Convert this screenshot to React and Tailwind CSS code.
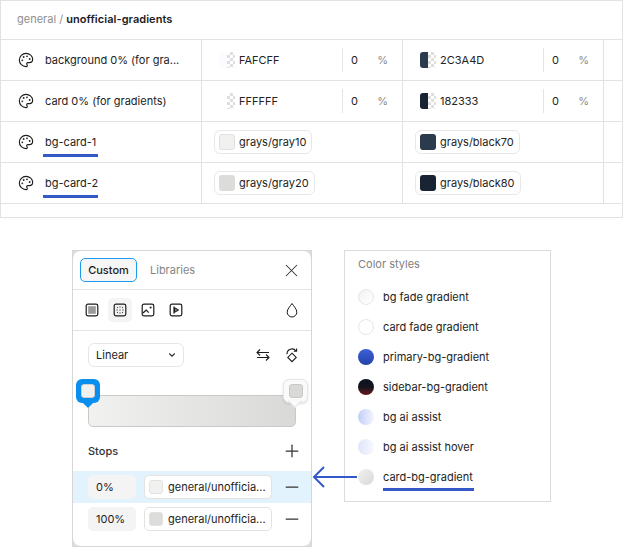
import { ChevronDown, Minus, Palette, Plus, X } from "lucide-react";

const CHECKER = "bg-[repeating-conic-gradient(#dedede_0_25%,#ffffff_0_50%)] bg-[length:6px_6px]";

const ROWS = [
  { name: "background 0% (for gra...", a: { hex: "FAFCFF", color: "bg-[#fafcff]" }, b: { hex: "2C3A4D", color: "bg-[#2c3a4d]" } },
  { name: "card 0% (for gradients)", a: { hex: "FFFFFF", color: "bg-white" }, b: { hex: "182333", color: "bg-[#182333]" } },
  { name: "bg-card-1", mark: true, a: { chip: "grays/gray10", color: "bg-[#f1f1f0] border border-[#e0e0e0]" }, b: { chip: "grays/black70", color: "bg-[#2c3a4d]" } },
  { name: "bg-card-2", mark: true, a: { chip: "grays/gray20", color: "bg-[#dcdcda]" }, b: { chip: "grays/black80", color: "bg-[#182333]" } },
];

const STYLES = [
  { name: "bg fade gradient", swatch: "bg-gradient-to-br from-[#f1f1f1] to-white border border-[#e6e6e6]" },
  { name: "card fade gradient", swatch: "bg-white border border-[#e6e6e6]" },
  { name: "primary-bg-gradient", swatch: "bg-gradient-to-b from-[#3d60d8] to-[#2342a8]" },
  { name: "sidebar-bg-gradient", swatch: "bg-gradient-to-b from-[#0b1220] via-[#14141f] to-[#6b0f14]" },
  { name: "bg ai assist", swatch: "bg-gradient-to-r from-[#c3cff5] to-[#f3f5fe]" },
  { name: "bg ai assist hover", swatch: "bg-gradient-to-r from-[#dfe5fa] to-[#f8f9fe]" },
  { name: "card-bg-gradient", swatch: "bg-gradient-to-br from-[#f1f1f0] to-[#d8d8d6]", mark: true },
];

function ColorCell({ value }) {
  if (value.chip) {
    return (
      <div className="flex h-[24px] items-center gap-[4px] rounded-[6px] border border-[#e8e8e8] pl-[4px] pr-[5px]">
        <span className={`h-4 w-4 rounded-[3px] ${value.color}`} />
        <span>{value.chip}</span>
      </div>
    );
  }
  return (
    <>
      <div className="flex h-[24px] w-[128px] items-center gap-[4px] pl-[5px]">
        <span className="flex h-4 w-4 overflow-hidden rounded-[3px]">
          <span className={`h-4 w-2 ${value.color}`} />
          <span className={`h-4 w-2 ${CHECKER}`} />
        </span>
        <span>{value.hex}</span>
      </div>
      <div className="flex h-[24px] flex-1 items-center border-l border-[#e4e4e4] pl-[8px] pr-[14px]">
        <span>0</span>
        <span className="ml-auto text-[#8a8a8a]">%</span>
      </div>
    </>
  );
}

function Tokens() {
  return (
    <div className="border border-[#e2e2e2] h-[218px]">
      <div className="flex h-[39px] items-center border-b border-[#e2e2e2] pl-[16px] pb-[3px] text-[#8f8f8f]">
        general /&nbsp;<b className="font-semibold tracking-[0.005em] text-[#1c1c1c]">unofficial-gradients</b>
      </div>
      {ROWS.map((row) => (
        <div key={row.name} className="grid h-[41px] grid-cols-[201px_201px_201px_1fr] border-b border-[#e2e2e2] text-[#232323]">
          <div className="relative flex items-center gap-[11px] border-r border-[#e2e2e2] pl-[17px]">
            <Palette size={16} strokeWidth={1.7} className="text-[#1c1c1c]" />
            <span>{row.name}</span>
            {row.mark && <span className="absolute bottom-[5px] left-[42px] h-[3px] w-[55px] bg-[#3558c8]" />}
          </div>
          <div className="flex items-center border-r border-[#e2e2e2] pl-[12px]"><ColorCell value={row.a} /></div>
          <div className="flex items-center border-r border-[#e2e2e2] pl-[12px]"><ColorCell value={row.b} /></div>
          <div />
        </div>
      ))}
    </div>
  );
}

function FillIcon({ children }) {
  return (
    <svg width="14" height="14" viewBox="0 0 14 14" fill="none" stroke="#1c1c1c" strokeWidth="1.2">
      <rect x="1.2" y="1.2" width="11.6" height="11.6" rx="1.8" />
      {children}
    </svg>
  );
}

function StopRow({ pct, color }) {
  return (
    <>
      <span className="flex h-6 w-[48px] items-center rounded-[5px] bg-[#f4f4f4] pl-[8px] text-[#232323]">{pct}</span>
      <span className="ml-[8px] flex h-6 w-[128px] items-center gap-[5px] rounded-[5px] border border-[#e2e2e2] bg-white pl-[4px] text-[#232323]">
        <span className={`h-[14px] w-[14px] rounded-[3px] border border-[#e2e2e2] ${color}`} />
        general/unofficia...
      </span>
      <Minus size={20} strokeWidth={1.5} className="ml-auto text-[#333]" />
    </>
  );
}

function Picker() {
  return (
    <div className="h-[297px] w-[240px] border border-[#d6d6d6] bg-[#dde1e6]">
      <div className="relative h-full rounded-[8px] bg-white">
        <div className="flex h-[39px] items-center border-b border-[#e4e4e4] pl-[7px] pr-[9px]">
          <span className="flex h-[24px] w-[57px] items-center justify-center rounded-[5px] border border-[#1d9bf0] bg-[#f6f6f6] font-medium text-[#1c1c1c]">Custom</span>
          <span className="ml-[13px] text-[#858585]">Libraries</span>
          <X size={21} strokeWidth={1.2} className="ml-auto text-[#333]" />
        </div>
        <div className="flex h-[41px] items-center border-b border-[#e4e4e4] pl-[7px] pr-[12px]">
          <span className="flex h-6 w-6 items-center justify-center">
            <FillIcon><rect x="3.2" y="3.2" width="7.6" height="7.6" fill="#9a9a9a" stroke="none" /></FillIcon>
          </span>
          <span className="ml-1 flex h-6 w-6 items-center justify-center rounded-[5px] bg-[#f4f4f4]">
            <FillIcon>
              <g fill="#555" stroke="none">
                <circle cx="4.5" cy="4.5" r=".7" /><circle cx="7" cy="4" r=".7" /><circle cx="9.5" cy="4.5" r=".7" />
                <circle cx="4" cy="7" r=".7" /><circle cx="7" cy="7" r=".7" /><circle cx="10" cy="7" r=".7" />
                <circle cx="4.5" cy="9.5" r=".7" /><circle cx="7" cy="10" r=".7" /><circle cx="9.5" cy="9.5" r=".7" />
              </g>
            </FillIcon>
          </span>
          <span className="ml-1 flex h-6 w-6 items-center justify-center">
            <FillIcon>
              <path d="M2 10l3.2-3 2.6 2.6" />
              <circle cx="9.6" cy="4.4" r="1" fill="#1c1c1c" stroke="none" />
            </FillIcon>
          </span>
          <span className="ml-1 flex h-6 w-6 items-center justify-center">
            <FillIcon>
              <path d="M5 3.5v7" /><path d="M5.5 4.6L9.6 7l-4.1 2.4z" fill="#777" strokeWidth="1" />
            </FillIcon>
          </span>
          <svg className="ml-auto" width="14" height="16" viewBox="0 0 14 16" fill="none" stroke="#1c1c1c" strokeWidth="1">
            <path d="M7 1.5C5 4.5 2.2 7 2.2 10.2a4.8 4.8 0 0 0 9.6 0C11.8 7 9 4.5 7 1.5z" />
          </svg>
        </div>
        <div className="flex h-[36px] items-end pl-[15px] pr-[12px]">
          <div className="flex h-[24px] w-[96px] items-center rounded-[6px] border border-[#e6e6e6] pl-[7px] pr-[6px] text-[#232323]">
            Linear
            <ChevronDown size={10} strokeWidth={2.6} className="ml-auto text-[#333]" />
          </div>
          <div className="ml-auto mb-[4px] flex items-center gap-[15px]">
            <svg width="14" height="14" viewBox="0 0 14 14" fill="none" stroke="#1c1c1c" strokeWidth="1.1">
              <path d="M1 4.5h12M4 1.5L1 4.5l3 3" /><path d="M13 9.5H1M10 6.5l3 3-3 3" />
            </svg>
            <svg width="14" height="16" viewBox="0 0 14 16" fill="none" stroke="#1c1c1c" strokeWidth="1.1">
              <path d="M7 6.2l4.2 4.2L7 14.6l-4.2-4.2z" />
              <path d="M2 7.2a5 5 0 0 1 9-3.2M11.6 1.4V4.3H8.8" />
            </svg>
          </div>
        </div>
        <div className="ml-[15px] mr-[15px] mt-[28px] h-[32px] rounded-[5px] border border-[#c9c9c7] bg-gradient-to-r from-[#f1f1f0] to-[#d9d9d7]" />
        <span className="absolute left-[3px] top-[128px] flex h-[24px] w-[24px] items-center justify-center rounded-[6px] bg-[#0a8fef]">
          <span className="absolute -bottom-[3px] left-[7px] h-[10px] w-[10px] rotate-45 bg-[#0a8fef]" />
          <span className="absolute h-[14px] w-[14px] rounded-[3px] border border-[#d0d0d0] bg-[#f1f1f0]" />
        </span>
        <span className="absolute left-[210px] top-[128px] flex h-[24px] w-[25px] items-center justify-center rounded-[6px] border border-[#e6e6e6] bg-[#fafafa] shadow-sm">
          <span className="absolute -bottom-[4px] left-[6px] h-[10px] w-[10px] rotate-45 border-b border-r border-[#e6e6e6] bg-[#fafafa]" />
          <span className="absolute h-[14px] w-[14px] rounded-[3px] border border-[#c8c8c6] bg-[#d9d9d7]" />
        </span>
        <div className="flex h-[44px] items-center pl-[15px] pr-[9px] pt-[4px] font-medium text-[#333]">
          Stops
          <Plus size={20} strokeWidth={1.5} className="ml-auto text-[#333]" />
        </div>
        <div className="flex h-[32px] items-center bg-[#e2f3fd] pl-[15px] pr-[9px]">
          <StopRow pct="0%" color="bg-[#f1f1f0]" />
        </div>
        <div className="flex h-[32px] items-center pl-[15px] pr-[9px]">
          <StopRow pct="100%" color="bg-[#dcdcda]" />
        </div>
      </div>
    </div>
  );
}

function ColorStyles() {
  return (
    <div className="relative h-[252px] w-[207px] border border-[#dcdcdc] bg-white pl-[13px] pt-[6px]">
      <div className="text-[#808080]">Color styles</div>
      <div className="mt-[11px] flex flex-col">
        {STYLES.map((s) => (
          <div key={s.name} className="relative flex h-[30px] items-center gap-[9px] text-[#232323]">
            <span className={`h-4 w-4 rounded-full ${s.swatch}`} />
            <span>{s.name}</span>
            {s.mark && <span className="absolute bottom-[1px] left-[25px] h-[3px] w-[91px] bg-[#3558c8]" />}
          </div>
        ))}
      </div>
    </div>
  );
}

export default function App() {
  return (
    <div className="h-[547px] w-[623px] overflow-hidden bg-white font-['Inter',sans-serif] text-[11px] leading-[14px]">
      <Tokens />
      <div className="relative mt-[32px] ml-[72px] flex items-start gap-[32px]">
        <Picker />
        <ColorStyles />
        <svg className="absolute left-[240px] top-[214px]" width="46" height="26" viewBox="0 0 46 26" fill="none" stroke="#3558c8" strokeWidth="2">
          <path d="M45 13H2M12 3L2 13l10 10" />
        </svg>
      </div>
    </div>
  );
}
